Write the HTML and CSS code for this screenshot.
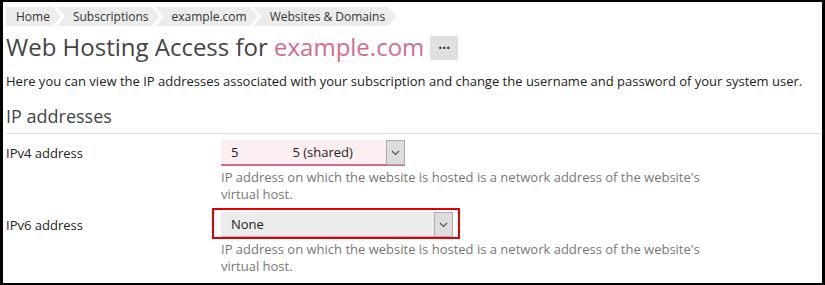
FILE: index.html
```html
<!DOCTYPE html>
<html lang="en">
<head>
    <meta charset="UTF-8">
    <title>Web Hosting Access</title>
    <link rel="stylesheet" href="styles.css">
</head>
<body>
    <div class="frame">
        <ul class="crumbs">
            <li class="crumb first">Home</li>
            <li class="crumb">Subscriptions</li>
            <li class="crumb">example.com</li>
            <li class="crumb">Websites &amp; Domains</li>
        </ul>
        <div class="title-row">
            <h1>Web Hosting Access for <span class="domain">example.com</span></h1>
            <button class="more">&middot;&middot;&middot;</button>
        </div>
        <p class="intro">Here you can view the IP addresses associated with your subscription and change the username and password of your system user.</p>
        <h2 class="section">IP addresses</h2>
        <div class="form">
            <div class="row">
                <div class="label">IPv4 address</div>
                <div class="field">
                    <div class="select v4">
                        <span class="value">5<span class="gap"></span>5 (shared)</span>
                        <span class="arrow"><svg width="9" height="6" viewBox="0 0 9 6"><path d="M1 1l3.5 3.5L8 1" fill="none" stroke="#555" stroke-width="1.2"/></svg></span>
                    </div>
                    <div class="hint">IP address on which the website is hosted is a network address of the website's virtual host.</div>
                </div>
            </div>
            <div class="row">
                <div class="label">IPv6 address</div>
                <div class="field">
                    <div class="select v6 marked">
                        <span class="value">None</span>
                        <span class="arrow"><svg width="9" height="6" viewBox="0 0 9 6"><path d="M1 1l3.5 3.5L8 1" fill="none" stroke="#555" stroke-width="1.2"/></svg></span>
                    </div>
                    <div class="hint">IP address on which the website is hosted is a network address of the website's virtual host.</div>
                </div>
            </div>
        </div>
    </div>
</body>
</html>
```

FILE: styles.css
```css
html, body {
    margin: 0;
    padding: 0;
}
body {
    width: 825px;
    height: 285px;
    box-sizing: border-box;
    border: 2px solid #000;
    border-right-width: 3px;
    border-left-width: 3px;
    overflow: hidden;
    background: #fff;
    font-family: 'Open Sans', 'Liberation Sans', sans-serif;
    font-size: 13px;
    color: #222;
}
.frame {
    padding: 5px 0 0 3px;
}
.crumbs {
    list-style: none;
    margin: 0;
    padding: 0;
    display: flex;
    font-size: 12px;
}
.crumb {
    background: #ececec;
    color: #333;
    height: 19px;
    line-height: 19px;
    padding: 0 11px 0 16px;
    margin-left: -4px;
    clip-path: polygon(0 0, calc(100% - 8px) 0, 100% 50%, calc(100% - 8px) 100%, 0 100%, 8px 50%);
}
.crumb.first {
    margin-left: 0;
    padding-left: 10px;
    clip-path: polygon(0 0, calc(100% - 8px) 0, 100% 50%, calc(100% - 8px) 100%, 0 100%);
}
.title-row {
    display: flex;
    align-items: center;
    gap: 6px;
    margin-top: 6px;
}
h1 {
    margin: 0;
    font-weight: normal;
    font-size: 24px;
    line-height: 30px;
    color: #444;
}
.domain {
    color: #d46b8e;
}
.more {
    width: 28px;
    height: 24px;
    border: 0;
    background: #e0e0e0;
    color: #333;
    font-family: inherit;
    font-size: 14px;
    font-weight: bold;
    padding: 0;
    line-height: 20px;
    margin-top: 2px;
}
.intro {
    margin: 10px 0 0;
    line-height: 18px;
}
.section {
    margin: 14px 0 0;
    font-weight: normal;
    font-size: 18px;
    line-height: 24px;
    color: #444;
    padding-bottom: 5px;
    border-bottom: 1px solid #ddd;
}
.form {
    padding-top: 6px;
}
.row {
    display: flex;
}
.label {
    width: 215px;
    line-height: 26px;
}
.field {
    display: flex;
    flex-direction: column;
}
.select {
    display: flex;
    justify-content: space-between;
    height: 24px;
    line-height: 24px;
    color: #222;
}
.select .value {
    padding-left: 10px;
}
.gap {
    display: inline-block;
    width: 54px;
}
.select .arrow {
    width: 17px;
    height: 23px;
    background: #ddd;
    border: 1px solid #aaa;
    display: flex;
    align-items: center;
    justify-content: center;
}
.v4 {
    width: 184px;
    background: #fbeef1;
    border-bottom: 2px solid #cf6a8c;
}
.v6 {
    width: 232px;
    background: #ececec;
    border-bottom: 2px solid #b5b5b5;
}
.marked {
    position: relative;
}
.marked::after {
    content: "";
    position: absolute;
    top: -4px;
    left: -9px;
    right: -7px;
    bottom: -3px;
    border: 2px solid #e00000;
}
.hint {
    color: #777;
    width: 490px;
    line-height: 17px;
    padding: 3px 0 9px;
}
```
